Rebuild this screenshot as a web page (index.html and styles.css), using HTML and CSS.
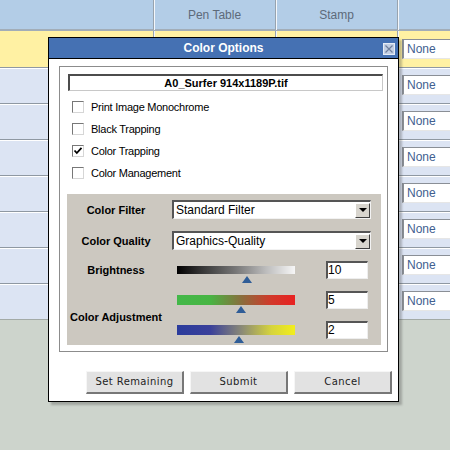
FILE: index.html
```html
<!DOCTYPE html>
<html>
<head>
<meta charset="utf-8">
<link rel="stylesheet" href="styles.css">
</head>
<body>
<div class="screen">
  <div class="table">
    <div class="row head">
      <div class="cell c1"></div><div class="cell c2">Pen Table</div><div class="cell c3">Stamp</div><div class="cell c4"></div>
    </div>
    <div class="row yellow">
      <div class="cell c1"></div><div class="cell c2"></div><div class="cell c3"></div><div class="cell c4"><div class="none-field">None</div></div>
    </div>
    <div class="row blue">
      <div class="cell c1"></div><div class="cell c2"></div><div class="cell c3"></div><div class="cell c4"><div class="none-field">None</div></div>
    </div>
    <div class="row blue">
      <div class="cell c1"></div><div class="cell c2"></div><div class="cell c3"></div><div class="cell c4"><div class="none-field">None</div></div>
    </div>
    <div class="row blue">
      <div class="cell c1"></div><div class="cell c2"></div><div class="cell c3"></div><div class="cell c4"><div class="none-field">None</div></div>
    </div>
    <div class="row blue">
      <div class="cell c1"></div><div class="cell c2"></div><div class="cell c3"></div><div class="cell c4"><div class="none-field">None</div></div>
    </div>
    <div class="row blue">
      <div class="cell c1"></div><div class="cell c2"></div><div class="cell c3"></div><div class="cell c4"><div class="none-field">None</div></div>
    </div>
    <div class="row blue">
      <div class="cell c1"></div><div class="cell c2"></div><div class="cell c3"></div><div class="cell c4"><div class="none-field">None</div></div>
    </div>
    <div class="row blue">
      <div class="cell c1"></div><div class="cell c2"></div><div class="cell c3"></div><div class="cell c4"><div class="none-field">None</div></div>
    </div>
  </div>

  <div class="dialog">
    <div class="titlebar">
      <span class="title">Color Options</span>
      <span class="close">
        <svg width="12" height="12" viewBox="0 0 12 12"><rect x="0.5" y="0.5" width="11" height="11" fill="#c3cfe3" stroke="#e6ecf5"/><path d="M2.5 2.5 L9.5 9.5 M9.5 2.5 L2.5 9.5" stroke="#6f7f9c" stroke-width="1.2"/></svg>
      </span>
    </div>
    <div class="panel">
      <div class="filename">A0_Surfer 914x1189P.tif</div>
      <div class="checks">
        <div class="check"><span class="box"></span><span>Print Image Monochrome</span></div>
        <div class="check"><span class="box"></span><span>Black Trapping</span></div>
        <div class="check"><span class="box"><svg width="10" height="10" viewBox="0 0 10 10"><path d="M1.5 4.5 L3.8 7 L8.5 1.8" fill="none" stroke="#000" stroke-width="1.8"/></svg></span><span>Color Trapping</span></div>
        <div class="check"><span class="box"></span><span>Color Management</span></div>
      </div>
      <div class="settings">
        <div class="set-row first">
          <div class="lbl">Color Filter</div>
          <div class="select"><span>Standard Filter</span><span class="drop"><span class="arrow"></span></span></div>
        </div>
        <div class="set-row second">
          <div class="lbl">Color Quality</div>
          <div class="select"><span>Graphics-Quality</span><span class="drop"><span class="arrow"></span></span></div>
        </div>
        <div class="set-row bright">
          <div class="lbl top">Brightness</div>
          <div class="slider-row tall">
            <div class="slider"><div class="bar bw thin"></div><div class="tri" style="margin-left:65px"></div></div>
            <div class="num">10</div>
          </div>
        </div>
        <div class="set-row adjust">
          <div class="lbl">Color Adjustment</div>
          <div class="sliders">
            <div class="slider-row tall">
              <div class="slider"><div class="bar gr"></div><div class="tri" style="margin-left:59px"></div></div>
              <div class="num">5</div>
            </div>
            <div class="slider-row short">
              <div class="slider"><div class="bar by"></div><div class="tri" style="margin-left:57px"></div></div>
              <div class="num">2</div>
            </div>
          </div>
        </div>
      </div>
    </div>
    <div class="buttons">
      <div class="btn">Set Remaining</div>
      <div class="btn">Submit</div>
      <div class="btn">Cancel</div>
    </div>
  </div>
</div>
</body>
</html>
```
FILE: styles.css
```css
html, body {
  margin: 0;
  padding: 0;
}
body {
  width: 450px;
  height: 450px;
  overflow: hidden;
  background: #cdd4cc;
  font-family: "Liberation Sans", Arial, sans-serif;
  font-size: 11px;
  color: #000;
}
.screen {
  position: relative;
  width: 450px;
  height: 450px;
}
.table {
  border-bottom: 1px solid #a3aaa6;
}
.row {
  display: grid;
  grid-template-columns: 153px 122px 122px 1fr;
  height: 36px;
  box-sizing: border-box;
}
.cell + .cell {
  border-left: 1px solid #98a3ae;
  box-shadow: inset 1px 0 0 #f4f7fb;
}
.head {
  height: 31px;
  background: #b3cde7;
  border-bottom: 2px solid #a2adb8;
}
.head .cell {
  font-size: 12px;
  color: #5d6a7a;
  text-align: center;
  line-height: 30px;
}
.yellow {
  background: #fff1a3;
}
.blue {
  background: #dce4f3;
  border-top: 1px solid #8f98a2;
  box-shadow: inset 0 1px 0 #fff;
}
.yellow .c4 { padding-top: 8px; }
.blue .c4 { padding-top: 7px; }
.none-field {
  margin-left: 4px;
  height: 20px;
  box-sizing: border-box;
  background: #fff;
  border-top: 1px solid #8a8f96;
  border-left: 2px solid #8a8f96;
  border-bottom: 1px solid #e6e6e6;
  padding-left: 3px;
  font-size: 12px;
  line-height: 18px;
  color: #41608f;
}

.dialog {
  position: absolute;
  left: 48px;
  top: 37px;
  width: 351px;
  box-sizing: border-box;
  border: 1px solid #000;
  background: #fff;
  box-shadow: 3px 3px 2px rgba(60, 60, 60, 0.3);
}
.titlebar {
  position: relative;
  height: 20px;
  background: #4571b3;
  border-bottom: 1px solid #000;
  color: #fff;
  font-weight: bold;
  font-size: 12px;
  line-height: 20px;
  text-align: center;
}
.close {
  position: absolute;
  right: 3px;
  top: 5px;
  width: 12px;
  height: 12px;
  line-height: 0;
}
.panel {
  margin: 7px 10px 0;
  border: 1px solid #8c8c8c;
  padding: 7px 6px 6px 7px;
}
.filename {
  margin: 0 -2px 0 1px;
  height: 17px;
  box-sizing: border-box;
  border-top: 2px solid #4c4c4c;
  border-left: 2px solid #4c4c4c;
  border-right: 1px solid #c8c8c8;
  border-bottom: 1px solid #c8c8c8;
  font-weight: bold;
  font-size: 11px;
  line-height: 14px;
  text-align: center;
}
.checks {
  margin-top: 5px;
}
.check {
  display: flex;
  align-items: center;
  height: 22px;
  padding-left: 5px;
  gap: 7px;
  font-size: 11px;
  letter-spacing: -0.25px;
}
.box {
  width: 12px;
  height: 12px;
  box-sizing: border-box;
  background: #fff;
  border-top: 1px solid #777;
  border-left: 1px solid #777;
  border-right: 1px solid #d6d6d6;
  border-bottom: 1px solid #d6d6d6;
  display: flex;
  align-items: center;
  justify-content: center;
}
.settings {
  margin-top: 10px;
  background: #ccc8c0;
  padding-top: 6px;
}
.set-row {
  display: flex;
  align-items: center;
}
.set-row.first { margin-bottom: 12px; }
.set-row.second { margin-bottom: 9px; }
.set-row.bright { align-items: flex-start; }
.lbl {
  width: 98px;
  margin-right: 7px;
  text-align: center;
  font-weight: bold;
  font-size: 11px;
  line-height: 14px;
  flex: none;
}
.lbl.top { padding-top: 4px; }
.select {
  width: 199px;
  height: 19px;
  box-sizing: border-box;
  background: #fff;
  border-top: 2px solid #555;
  border-left: 2px solid #555;
  border-right: 1px solid #f2f2f2;
  border-bottom: 1px solid #f2f2f2;
  display: flex;
  align-items: center;
  padding-left: 2px;
  font-size: 12px;
}
.drop {
  margin-left: auto;
  width: 15px;
  height: 15px;
  box-sizing: border-box;
  background: #d8d5ce;
  border-top: 1px solid #fff;
  border-left: 1px solid #fff;
  border-right: 1px solid #404040;
  border-bottom: 1px solid #404040;
  display: flex;
  align-items: center;
  justify-content: center;
}
.arrow {
  width: 0;
  height: 0;
  border-left: 4px solid transparent;
  border-right: 4px solid transparent;
  border-top: 4px solid #000;
}
.sliders {
  width: 199px;
  flex: none;
}
.slider-row {
  display: flex;
  align-items: flex-start;
  width: 199px;
  flex: none;
}
.slider-row.tall { height: 30px; }
.slider-row.short { height: 26px; }
.slider {
  margin-left: 5px;
  width: 118px;
  padding-top: 6px;
}
.bar {
  height: 10px;
}
.bar.thin {
  height: 8px;
  margin-top: 1px;
  margin-bottom: 2px;
}
.bw {
  background: linear-gradient(to right, #000 0%, #333 20%, #777 50%, #bbb 75%, #f6f6f6 100%);
}
.gr {
  background: linear-gradient(to right, #43b849 0%, #47b543 28%, #8a6d3c 55%, #d2382a 80%, #e82222 100%);
}
.by {
  background: linear-gradient(to right, #2b3c9c 0%, #3a409a 28%, #8b8a76 55%, #d6d43c 80%, #f2ee1c 100%);
}
.tri {
  width: 0;
  height: 0;
  margin-top: 1px;
  border-left: 5px solid transparent;
  border-right: 5px solid transparent;
  border-bottom: 7px solid #2f5d97;
}
.num {
  margin-left: auto;
  margin-right: 3px;
  margin-top: 2px;
  width: 42px;
  height: 18px;
  box-sizing: border-box;
  background: #fff;
  border-top: 2px solid #555;
  border-left: 2px solid #555;
  border-right: 1px solid #eee;
  border-bottom: 1px solid #eee;
  font-size: 12px;
  line-height: 15px;
  padding-left: 0;
}
.buttons {
  display: flex;
  justify-content: flex-end;
  gap: 6px;
  padding: 19px 6px 7px 0;
}
.btn {
  width: 98px;
  height: 23px;
  box-sizing: border-box;
  background: #e2e2e2;
  border-top: 1px solid #f6f6f6;
  border-left: 1px solid #f6f6f6;
  border-right: 2px solid #777;
  border-bottom: 2px solid #777;
  font-family: "DejaVu Sans", Verdana, sans-serif;
  font-size: 10px;
  letter-spacing: 0.4px;
  color: #222;
  text-align: center;
  line-height: 20px;
}
```
